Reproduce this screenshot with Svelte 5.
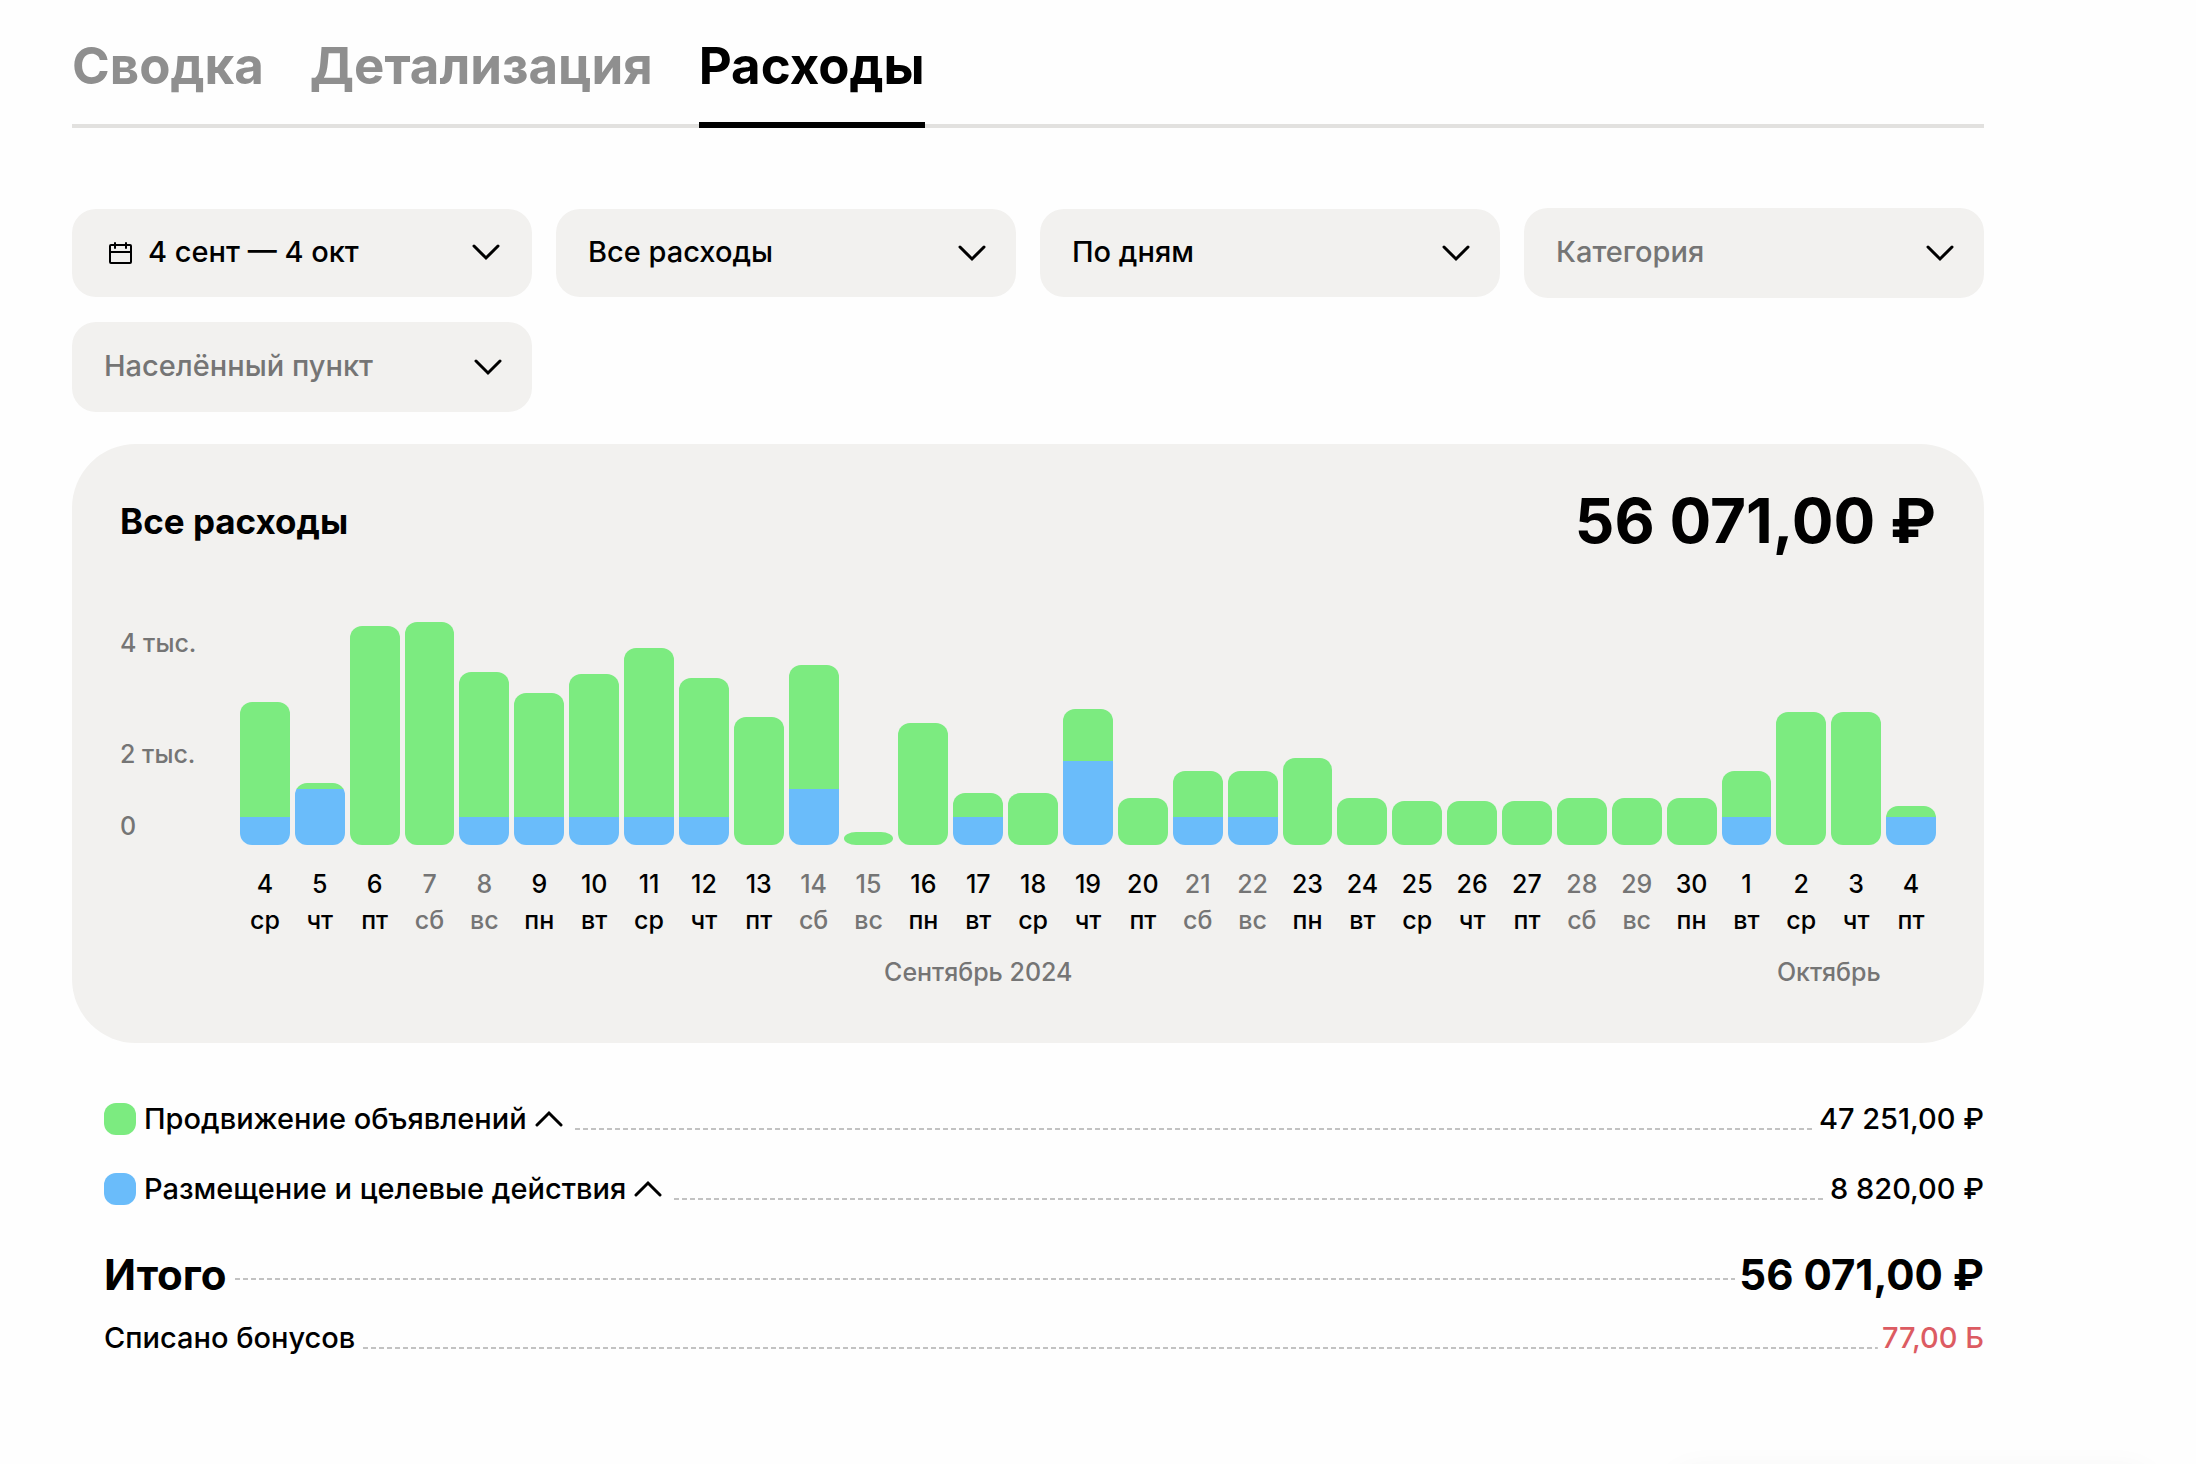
<script lang="ts">
	type Day = {
		date: number
		weekday: string
		promo: number
		placement: number
	}

	// roubles per pixel of bar height
	const SCALE = 17.5

	const raw: [number, string, number, number][] = [
		[4, 'ср', 2012, 490],
		[5, 'чт', 105, 980],
		[6, 'пт', 3832, 0],
		[7, 'сб', 3902, 0],
		[8, 'вс', 2538, 490],
		[9, 'пн', 2170, 490],
		[10, 'вт', 2502, 490],
		[11, 'ср', 2958, 490],
		[12, 'чт', 2432, 490],
		[13, 'пт', 2240, 0],
		[14, 'сб', 2170, 980],
		[15, 'вс', 236, 0],
		[16, 'пн', 2135, 0],
		[17, 'вт', 420, 490],
		[18, 'ср', 910, 0],
		[19, 'чт', 910, 1470],
		[20, 'пт', 822, 0],
		[21, 'сб', 805, 490],
		[22, 'вс', 805, 490],
		[23, 'пн', 1522, 0],
		[24, 'вт', 822, 0],
		[25, 'ср', 762, 0],
		[26, 'чт', 762, 0],
		[27, 'пт', 762, 0],
		[28, 'сб', 822, 0],
		[29, 'вс', 822, 0],
		[30, 'пн', 822, 0],
		[1, 'вт', 805, 490],
		[2, 'ср', 2328, 0],
		[3, 'чт', 2328, 0],
		[4, 'пт', 192, 490],
	]
	const days: Day[] = raw.map(([date, weekday, promo, placement]) => ({ date, weekday, promo, placement }))

	const tabs = ['Сводка', 'Детализация', 'Расходы']
	let activeTab = $state('Расходы')

	let expense = $state('Все расходы')
	let period = $state('По дням')
	let category = $state('')
	let city = $state('')

	const legend = [
		{ name: 'Продвижение объявлений', kind: 'promo', amount: '47 251,00 ₽' },
		{ name: 'Размещение и целевые действия', kind: 'placement', amount: '8 820,00 ₽' },
	]

	function isWeekend(day: Day) {
		return day.weekday === 'сб' || day.weekday === 'вс'
	}
</script>

{#snippet chevron(up = false)}
	<svg class="chevron" width="28" height="18" viewBox="0 0 28 18" aria-hidden="true">
		<path d={up ? 'M2 15 14 3l12 12' : 'M2 3l12 12L26 3'} />
	</svg>
{/snippet}

<main>
	<nav>
		{#each tabs as tab}
			<a href="#{tab}" class:active={tab === activeTab} onclick={() => (activeTab = tab)}>{tab}</a>
		{/each}
	</nav>

	<div class="filters">
		<button class="field date">
			<svg class="calendar" width="24" height="24" viewBox="0 0 24 24" aria-hidden="true">
				<rect x="2" y="5" width="21" height="18" rx="1" />
				<path d="M2 12h21M7 3v5M18 3v5" />
			</svg>
			<span>4 сент — 4 окт</span>
			{@render chevron()}
		</button>

		<div class="field">
			<select bind:value={expense} aria-label="Тип расходов">
				<option>Все расходы</option>
			</select>
			{@render chevron()}
		</div>

		<div class="field">
			<select bind:value={period} aria-label="Период">
				<option>По дням</option>
			</select>
			{@render chevron()}
		</div>

		<div class="field tall">
			<select bind:value={category} class:empty={!category} aria-label="Категория">
				<option value="">Категория</option>
			</select>
			{@render chevron()}
		</div>

		<div class="field tall">
			<select bind:value={city} class:empty={!city} aria-label="Населённый пункт">
				<option value="">Населённый пункт</option>
			</select>
			{@render chevron()}
		</div>
	</div>

	<section class="card">
		<header>
			<h2>Все расходы</h2>
			<strong>56 071,00 ₽</strong>
		</header>

		<div class="chart">
			<div class="axis">
				<span>4 тыс.</span>
				<span>2 тыс.</span>
				<span>0</span>
			</div>
			<div class="days">
				{#each days as day}
					<div class="day" class:weekend={isWeekend(day)}>
						<div class="plot">
							<div class="bar">
								<div class="promo" style="height: {Math.round(day.promo / SCALE)}px"></div>
								<div class="placement" style="height: {Math.round(day.placement / SCALE)}px"></div>
							</div>
						</div>
						<span>{day.date}</span>
						<span>{day.weekday}</span>
					</div>
				{/each}
				<div class="month september">Сентябрь 2024</div>
				<div class="month october">Октябрь</div>
			</div>
		</div>
	</section>

	<div class="summary">
		{#each legend as item}
			<div class="row">
				<button class="toggle">
					<i class="swatch {item.kind}"></i>
					<span>{item.name}</span>
					{@render chevron(true)}
				</button>
				<span class="leader"></span>
				<span>{item.amount}</span>
			</div>
		{/each}
		<div class="row total">
			<span>Итого</span>
			<span class="leader"></span>
			<span>56 071,00 ₽</span>
		</div>
		<div class="row">
			<span>Списано бонусов</span>
			<span class="leader"></span>
			<span class="bonus">77,00 Б</span>
		</div>
	</div>
</main>

<!-- panel docked under the bottom edge, only its shadow shows -->
<div class="dock" aria-hidden="true"></div>

<style>
	:global(body) {
		margin: 0;
		background: #fefefe;
	}

	main {
		--card: #f2f1ef;
		--muted: #757575;
		--green: #7ceb80;
		--blue: #6abcfa;
		padding: 0 212px 80px 72px;
		color: #000;
		font: 500 29px/40px Inter, "Open Sans", sans-serif;
	}

	button,
	select {
		border: none;
		background: none;
		color: inherit;
		font: inherit;
		cursor: pointer;
	}

	/* tabs */
	nav {
		display: flex;
		gap: 46px;
		padding-top: 34px;
		box-shadow: inset 0 -4px #e2e1df;
	}
	nav a {
		padding-bottom: 24px;
		border-bottom: 6px solid transparent;
		color: #8f8f8f;
		font-size: 51px;
		font-weight: 700;
		line-height: 64px;
		text-decoration: none;
	}
	nav a.active {
		border-color: #000;
		color: #000;
	}

	/* filters */
	.filters {
		display: grid;
		grid-template-columns: repeat(4, 1fr);
		align-items: center;
		gap: 24px;
		margin-top: 80px;
	}
	.field {
		display: grid;
		align-items: center;
		height: 88px;
		border-radius: 24px;
		background: var(--card);
	}
	.field.tall {
		height: 90px;
	}
	.field select {
		grid-area: 1 / 1;
		width: 100%;
		height: 100%;
		padding: 0 72px 2px 32px;
		border-radius: 24px;
		appearance: none;
	}
	.field select.empty {
		color: var(--muted);
	}
	.field .chevron {
		grid-area: 1 / 1;
		justify-self: end;
		margin-right: 30px;
		pointer-events: none;
	}
	.field.date {
		display: flex;
		gap: 16px;
		padding: 0 2px 2px 36px;
	}
	.date .chevron {
		margin-left: auto;
	}
	.chevron,
	.calendar {
		flex: none;
		fill: none;
		stroke: #000;
		stroke-width: 3;
		stroke-linecap: round;
		stroke-linejoin: miter;
	}
	.calendar {
		stroke-width: 2;
	}

	/* chart card */
	.card {
		margin-top: 32px;
		padding: 40px 48px 53px;
		border-radius: 64px;
		background: var(--card);
	}
	header {
		display: flex;
		align-items: center;
		justify-content: space-between;
		line-height: 74px;
	}
	h2 {
		margin: 0;
		font-size: 35px;
		font-weight: 700;
	}
	header strong {
		font-size: 62px;
		font-weight: 700;
	}
	.chart {
		display: grid;
		grid-template-columns: 120px 1fr;
		margin-top: 63px;
		font-size: 25px;
		line-height: 36px;
	}
	.axis {
		display: grid;
		grid-template-rows: 111px 72px 36px;
		align-content: start;
		padding-top: 4px;
		color: var(--muted);
	}
	.days {
		display: grid;
		grid-template-columns: repeat(31, 1fr);
		column-gap: 5px;
	}
	.day {
		display: flex;
		flex-direction: column;
		align-items: center;
		min-width: 0;
	}
	.day.weekend {
		color: var(--muted);
	}
	.plot {
		display: flex;
		align-items: flex-end;
		width: 100%;
		height: 224px;
		margin-bottom: 21px;
	}
	.bar {
		width: 100%;
		border-radius: 12px / min(12px, 50%);
		overflow: hidden;
	}
	.promo {
		background: var(--green);
	}
	.placement {
		background: var(--blue);
	}
	.month {
		margin-top: 16px;
		color: var(--muted);
		text-align: center;
	}
	.september {
		grid-column: 1 / span 27;
	}
	.october {
		grid-column: 28 / span 4;
	}

	/* summary */
	.summary {
		margin-top: 56px;
		padding-left: 32px;
	}
	.row {
		display: flex;
		align-items: center;
		gap: 4px;
	}
	.row + .row {
		margin-top: 30px;
	}
	.toggle {
		display: flex;
		align-items: center;
		gap: 8px;
		padding: 0 4px 0 0;
	}
	.swatch {
		width: 32px;
		height: 32px;
		border-radius: 12px;
	}
	.leader {
		flex: 1;
		height: 22px;
		margin-left: 4px;
		background: repeating-linear-gradient(90deg, #c2c2c2 0 5px, transparent 5px 8px) bottom / 100% 2px no-repeat;
	}
	.row.total {
		margin-top: 38px;
		font-size: 42px;
		font-weight: 700;
		line-height: 56px;
	}
	.total .leader {
		height: 10px;
	}
	.row.total + .row {
		margin-top: 15px;
	}
	.bonus {
		color: #dc5b62;
	}

	.dock {
		position: fixed;
		right: 44px;
		bottom: -88px;
		width: 480px;
		height: 80px;
		border-radius: 24px;
		box-shadow: 0 0 32px rgba(0, 0, 0, 0.05);
	}
</style>
